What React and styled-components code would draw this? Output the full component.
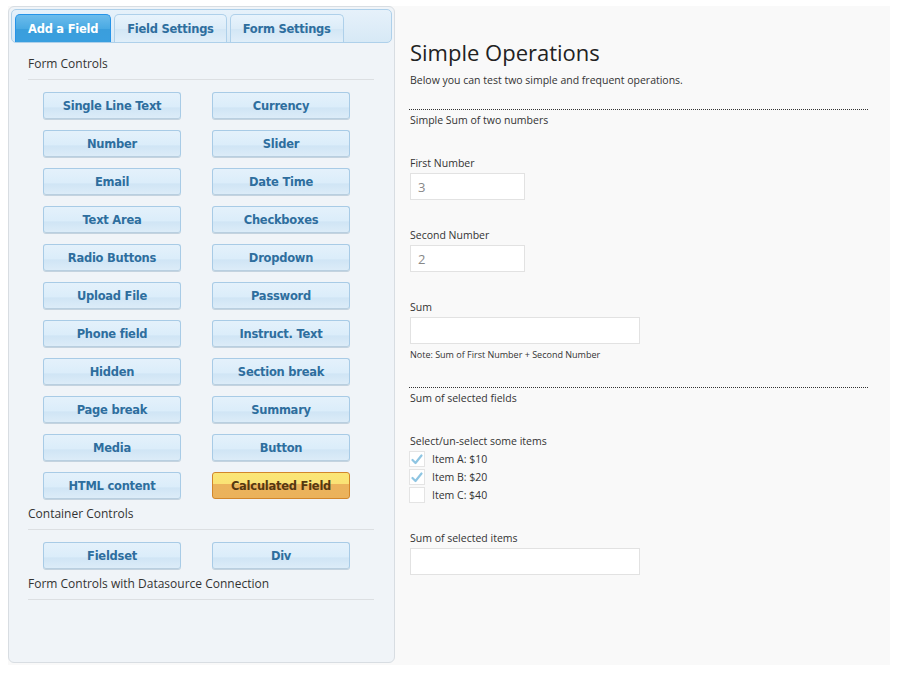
import React from "react";
import styled, { createGlobalStyle, css } from "styled-components";

const GlobalStyle = createGlobalStyle`
  html, body { margin: 0; padding: 0; background: #ffffff; }
  body { font-family: "Open Sans", "Noto Sans", sans-serif; }
  * { box-sizing: border-box; }
`;

const Page = styled.div`
  padding: 6px 8px 0 8px;
`;

const Frame = styled.div`
  display: flex;
  width: 882px;
  height: 659px;
  background: #f9f9f9;
`;

const LeftPanel = styled.div`
  width: 387px;
  height: 657px;
  border: 1px solid #d8dde2;
  border-radius: 6px;
  background: #f0f4f8;
  padding: 2px;
`;

const TabBar = styled.div`
  display: flex;
  align-items: flex-end;
  gap: 3px;
  height: 34px;
  padding: 0 0 0 3px;
  border: 1px solid #aed0ea;
  border-radius: 5px;
  background: linear-gradient(#e6f1fa, #d7e9f6);
`;

const Tab = styled.div`
  height: 28px;
  padding: 0 12px;
  display: flex;
  align-items: center;
  border: 1px solid #aed0ea;
  border-bottom: none;
  border-radius: 5px 5px 0 0;
  font-family: "DejaVu Sans", Verdana, sans-serif;
  font-weight: bold;
  font-size: 11.5px;
  letter-spacing: -0.25px;
  color: #2e6e9e;
  background: linear-gradient(#e8f3fc 0%, #dcecf8 50%, #d2e6f5 51%, #e0eef9 100%);
  ${(p) =>
    p.$active &&
    css`
      border-color: #2694e8;
      color: #ffffff;
      background: linear-gradient(#6cbcec 0%, #4aaae3 50%, #3a9edc 51%, #3a9fdf 100%);
    `}
`;

const Section = styled.div`
  padding: 0 18px 0 17px;
`;

const Heading = styled.div`
  margin-top: ${(p) => (p.$first ? 13 : 7)}px;
  padding-bottom: 7px;
  border-bottom: 1px solid #dcdfe2;
  font-size: 12px;
  line-height: 16px;
  color: #333;
  white-space: nowrap;
`;

const ButtonGrid = styled.div`
  display: grid;
  grid-template-columns: 138px 138px;
  column-gap: 31px;
  row-gap: 11px;
  margin-top: 12px;
  padding-left: 15px;
`;

const FieldButton = styled.div`
  height: 27px;
  display: flex;
  align-items: center;
  justify-content: center;
  border: 1px solid #a8cbe6;
  border-bottom-color: #b9cfe0;
  border-radius: 3px;
  background: linear-gradient(#e4f1fb 0%, #dbedfa 55%, #d0e5f5 60%, #dcecf8 100%);
  box-shadow: 0 1px 0 #c4d3df;
  font-family: "DejaVu Sans", Verdana, sans-serif;
  font-weight: bold;
  font-size: 11.5px;
  letter-spacing: -0.25px;
  color: #2e6e9e;
  ${(p) =>
    p.$highlight &&
    css`
      border-color: #d2862b;
      color: #553810;
      background: linear-gradient(#fbe676 0%, #fae275 45%, #ebb35c 46%, #ebb25b 100%);
      box-shadow: none;
    `}
`;

const RightPanel = styled.div`
  flex: 1;
  padding: 0 22px 0 15px;
  color: #333;
`;

const Title = styled.h1`
  margin: 31px 0 0 0;
  font-weight: 400;
  font-size: 22px;
  line-height: 30px;
  color: #222;
`;

const Subtitle = styled.div`
  margin-top: 6px;
  font-size: 10.5px;
  line-height: 14px;
`;

const SectionBreak = styled.div`
  margin-top: ${(p) => p.$top}px;
  border-top: 1px dotted #333;
  padding-top: 3px;
  font-size: 10.5px;
  line-height: 14px;
  margin-left: -1px;
  padding-left: 1px;
`;

const Field = styled.div`
  margin-top: ${(p) => p.$top}px;
`;

const Label = styled.div`
  font-size: 10.5px;
  line-height: 14px;
  margin-bottom: 3px;
`;

const Input = styled.div`
  width: ${(p) => p.$w}px;
  height: 27px;
  border: 1px solid #e2e2e2;
  background: #fff;
  padding: 0 7px;
  display: flex;
  align-items: center;
  font-size: 13px;
  color: #888;
`;

const Note = styled.div`
  margin-top: 5px;
  font-size: 9px;
  line-height: 12px;
`;

const CheckList = styled.div`
  display: flex;
  flex-direction: column;
  gap: 2px;
  margin-left: -1px;
`;

const CheckRow = styled.div`
  display: flex;
  align-items: center;
  gap: 7px;
  height: 16px;
  font-size: 10.5px;
`;

const Box = styled.span`
  width: 16px;
  height: 16px;
  border: 1px solid #e4e4e4;
  background: #fff;
  display: flex;
  align-items: center;
  justify-content: center;
`;

const Check = () => (
  <svg width="12" height="11" viewBox="0 0 12 11">
    <path d="M1.5 6 L4.5 9 L10.5 1.5" fill="none" stroke="#8ec5e2" strokeWidth="2.2" strokeLinecap="round" strokeLinejoin="round" />
  </svg>
);

const formControls = [
  "Single Line Text", "Currency", "Number", "Slider", "Email", "Date Time",
  "Text Area", "Checkboxes", "Radio Buttons", "Dropdown", "Upload File", "Password",
  "Phone field", "Instruct. Text", "Hidden", "Section break", "Page break", "Summary",
  "Media", "Button", "HTML content", "Calculated Field",
];

export default function App() {
  return (
    <Page>
      <GlobalStyle />
      <Frame>
        <LeftPanel>
          <TabBar>
            <Tab $active>Add a Field</Tab>
            <Tab>Field Settings</Tab>
            <Tab>Form Settings</Tab>
          </TabBar>
          <Section>
            <Heading $first>Form Controls</Heading>
            <ButtonGrid>
              {formControls.map((c) => (
                <FieldButton key={c} $highlight={c === "Calculated Field"}>{c}</FieldButton>
              ))}
            </ButtonGrid>
            <Heading>Container Controls</Heading>
            <ButtonGrid>
              <FieldButton>Fieldset</FieldButton>
              <FieldButton>Div</FieldButton>
            </ButtonGrid>
            <Heading>Form Controls with Datasource Connection</Heading>
          </Section>
        </LeftPanel>
        <RightPanel>
          <Title>Simple Operations</Title>
          <Subtitle>Below you can test two simple and frequent operations.</Subtitle>
          <SectionBreak $top={22}>Simple Sum of two numbers</SectionBreak>
          <Field $top={29}>
            <Label>First Number</Label>
            <Input $w={115}>3</Input>
          </Field>
          <Field $top={28}>
            <Label>Second Number</Label>
            <Input $w={115}>2</Input>
          </Field>
          <Field $top={28}>
            <Label>Sum</Label>
            <Input $w={230} />
            <Note>Note: Sum of First Number + Second Number</Note>
          </Field>
          <SectionBreak $top={26}>Sum of selected fields</SectionBreak>
          <Field $top={29}>
            <Label>Select/un-select some items</Label>
            <CheckList>
              <CheckRow><Box><Check /></Box>Item A: $10</CheckRow>
              <CheckRow><Box><Check /></Box>Item B: $20</CheckRow>
              <CheckRow><Box />Item C: $40</CheckRow>
            </CheckList>
          </Field>
          <Field $top={28}>
            <Label>Sum of selected items</Label>
            <Input $w={230} />
          </Field>
        </RightPanel>
      </Frame>
    </Page>
  );
}
